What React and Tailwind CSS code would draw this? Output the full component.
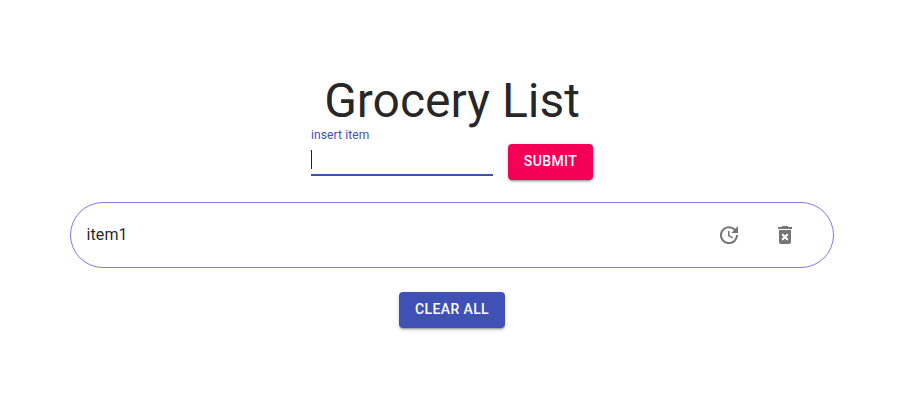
import { MdUpdate, MdDeleteForever } from "react-icons/md";

const raised =
  "h-9 rounded pb-px text-sm leading-[24.5px] font-medium tracking-[0.4px] uppercase text-white shadow-[0px_3px_1px_-2px_rgba(0,0,0,0.2),0px_2px_2px_0px_rgba(0,0,0,0.14),0px_1px_5px_0px_rgba(0,0,0,0.12)]";

function ItemRow({ name }) {
  return (
    <li className="flex h-[66px] items-center rounded-[33px] border border-[#8378e8] pl-[15.5px] pr-9">
      <span className="flex-1 text-base leading-6 tracking-[0.1px]">{name}</span>
      <button className="mr-8 text-black/54" aria-label="Edit">
        <MdUpdate size={24} />
      </button>
      <button className="text-black/54" aria-label="Delete">
        <MdDeleteForever size={24} />
      </button>
    </li>
  );
}

export default function App() {
  return (
    <main className="flex h-[400px] w-[904px] flex-col items-center bg-white pt-[73px] font-['Roboto',sans-serif] text-black/87">
      <h1 className="text-5xl leading-[56px] font-normal">Grocery List</h1>
      <form className="flex h-[51px] items-end gap-[15px]">
        <div className="mb-1 flex h-12 w-[182px] flex-col border-b-2 border-[#3f51b5]">
          <label className="text-xs leading-[14px] tracking-[0.11px] text-[#3f51b5]">insert item</label>
          <span className="mt-2 h-[19px] w-px bg-black/87" />
        </div>
        <button type="button" className={`${raised} w-[85px] bg-[#f50057]`}>
          Submit
        </button>
      </form>
      <ul className="mt-[22px] w-[764px]">
        <ItemRow name="item1" />
      </ul>
      <button type="button" className={`${raised} mt-6 w-[106px] bg-[#3f51b5]`}>
        Clear All
      </button>
    </main>
  );
}
